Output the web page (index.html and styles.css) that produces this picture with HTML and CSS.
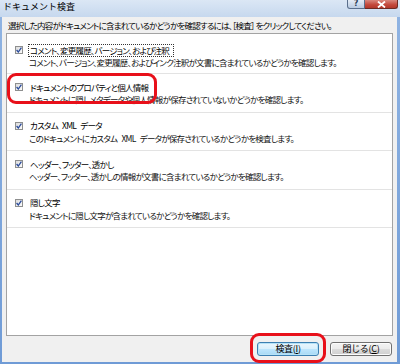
FILE: index.html
```html
<!DOCTYPE html>
<html lang="ja">
<head>
  <meta charset="UTF-8">
  <meta name="viewport" content="width=device-width, initial-scale=1.0">
  <link rel="stylesheet" href="styles.css">
</head>
<body>

<div class="window">
  <div class="titlebar">
    <span class="title">ドキュメント検査</span>
    <div class="caption-btns">
      <span class="cap-help">?</span>
      <span class="cap-close">
        <svg width="9" height="7" viewBox="0 0 9 7"><path d="M1 0.5 L8 6.5 M8 0.5 L1 6.5" stroke="#fff" stroke-width="1.8"/></svg>
      </span>
    </div>
  </div>

  <div class="frame">
    <div class="client">
      <p class="intro">選択した内容がドキュメントに含まれているかどうかを確認するには、［検査］ をクリックしてください。</p>

      <div class="panel">
        <div class="item">
          <div class="item-head">
            <span class="check"><svg width="6" height="6" viewBox="0 0 6 6"><path d="M0.6 3 L2.3 5 L5.4 0.6" fill="none" stroke="#2a4b9b" stroke-width="1.3"/></svg></span>
            <span class="label focus">コメント、変更履歴、バージョン、および注釈</span>
          </div>
          <div class="desc">コメント、バージョン、変更履歴、およびインク注釈が文書に含まれているかどうかを確認します。</div>
        </div>
        <div class="item">
          <div class="item-head">
            <span class="check"><svg width="6" height="6" viewBox="0 0 6 6"><path d="M0.6 3 L2.3 5 L5.4 0.6" fill="none" stroke="#2a4b9b" stroke-width="1.3"/></svg></span>
            <span class="label">ドキュメントのプロパティと個人情報</span>
          </div>
          <div class="desc">ドキュメントに隠しメタデータや個人情報が保存されていないかどうかを確認します。</div>
        </div>
        <div class="item">
          <div class="item-head">
            <span class="check"><svg width="6" height="6" viewBox="0 0 6 6"><path d="M0.6 3 L2.3 5 L5.4 0.6" fill="none" stroke="#2a4b9b" stroke-width="1.3"/></svg></span>
            <span class="label">カスタム XML データ</span>
          </div>
          <div class="desc">このドキュメントにカスタム XML データが保存されているかどうかを検査します。</div>
        </div>
        <div class="item">
          <div class="item-head">
            <span class="check"><svg width="6" height="6" viewBox="0 0 6 6"><path d="M0.6 3 L2.3 5 L5.4 0.6" fill="none" stroke="#2a4b9b" stroke-width="1.3"/></svg></span>
            <span class="label">ヘッダー、フッター、透かし</span>
          </div>
          <div class="desc">ヘッダー、フッター、透かしの情報が文書に含まれているかどうかを確認します。</div>
        </div>
        <div class="item">
          <div class="item-head">
            <span class="check"><svg width="6" height="6" viewBox="0 0 6 6"><path d="M0.6 3 L2.3 5 L5.4 0.6" fill="none" stroke="#2a4b9b" stroke-width="1.3"/></svg></span>
            <span class="label">隠し文字</span>
          </div>
          <div class="desc">ドキュメントに隠し文字が含まれているかどうかを確認します。</div>
        </div>
      </div>

      <div class="actions">
        <button class="btn default">検査(<u>I</u>)</button>
        <button class="btn">閉じる(<u>C</u>)</button>
      </div>
    </div>
  </div>

  <!-- red annotation marks -->
  <div class="mark mark-props"></div>
  <div class="mark mark-inspect"></div>
</div>

</body>
</html>
```

FILE: styles.css
```css
body {
  margin: 0;
  font-family: "Noto Sans CJK JP", sans-serif;
  font-size: 9px;
  color: #000;
}

.window {
  position: relative;
  width: 400px;
  height: 364px;
  display: flex;
  flex-direction: column;
  overflow: hidden;
}

.titlebar {
  height: 17px;
  display: flex;
  align-items: flex-start;
  background: linear-gradient(#dbe7f5, #c6d8ee);
}

.title {
  padding-left: 3px;
  line-height: 13px;
  font-size: 9px;
}

.caption-btns {
  margin-left: auto;
  margin-right: 2px;
  display: flex;
}

.cap-help,
.cap-close {
  height: 9px;
  display: flex;
  align-items: center;
  justify-content: center;
  box-sizing: border-box;
  border: 1px solid #5a6f8c;
  border-top: none;
}

.cap-help {
  width: 18px;
  border-radius: 0 0 0 3px;
  background: linear-gradient(#e4ecf6, #b9cbe2);
  font-family: "DejaVu Sans", sans-serif;
  font-size: 8px;
  font-weight: bold;
  color: #2c3e57;
  line-height: 8px;
}

.cap-close {
  width: 33px;
  border-left: none;
  border-color: #6d2a22;
  border-radius: 0 0 3px 0;
  background: linear-gradient(#d9877d, #c2473a 60%, #b3382c);
}

.frame {
  flex: 1;
  display: flex;
  background: linear-gradient(#8fb3e2, #6f9bd6);
  padding: 0 3px 2px 2px;
}

.client {
  flex: 1;
  display: flex;
  flex-direction: column;
  background: #f0f0f0;
  padding: 0 4px;
}

.intro {
  margin: 0;
  padding-left: 2px;
  height: 16px;
  line-height: 16px;
  font-size: 8.5px;
  font-feature-settings: "palt";
  letter-spacing: -0.8px;
  white-space: nowrap;
}

.panel {
  height: 303px;
  box-sizing: border-box;
  background: #fff;
  border: 1px solid #a3a3a3;
  padding-top: 3px;
}

.item {
  padding: 7px 0 6px 8px;
  border-bottom: 1px solid #e3e3e3;
  font-size: 8.5px;
  font-feature-settings: "palt";
  letter-spacing: -0.75px;
  word-spacing: 3px;
  white-space: nowrap;
}

.item:first-child {
  padding-bottom: 5px;
}

.item + .item {
  padding-bottom: 6.5px;
}

.item-head {
  display: flex;
  align-items: center;
  height: 12px;
}

.check {
  width: 8px;
  height: 8px;
  box-sizing: border-box;
  border: 1px solid #8e8f8f;
  background: linear-gradient(135deg, #dcdcdc, #fbfbfb);
  display: flex;
  align-items: center;
  justify-content: center;
  margin-right: 5px;
}

.label {
  line-height: 11px;
  border: 1px solid transparent;
  padding: 0 1px;
}

.label.focus {
  border: 1px dotted #333;
  padding-right: 4px;
}

.desc {
  height: 12px;
  line-height: 12px;
  padding-left: 14px;
  color: #111;
}

.actions {
  display: flex;
  justify-content: flex-end;
  gap: 11px;
  margin-top: 6px;
  padding-right: 1px;
}

.btn {
  width: 62px;
  height: 14px;
  padding: 0;
  font-family: "Noto Sans CJK JP", sans-serif;
  font-size: 9px;
  line-height: 12px;
  letter-spacing: -0.3px;
  color: #000;
  border: 1px solid #707070;
  border-radius: 3px;
  background: linear-gradient(#f3f3f3 0%, #ebebeb 50%, #dcdcdc 50%, #cfcfcf 100%);
  box-shadow: inset 0 0 0 1px #fcfcfc;
}

.btn.default {
  border-color: #3c7fb1;
  box-shadow: inset 0 0 0 1px #b6e2f7;
  background: linear-gradient(#eaf6fd 0%, #d9f0fc 50%, #bee6fd 50%, #a7d9f5 100%);
}

.btn u {
  text-decoration-thickness: 1px;
}

.mark {
  position: absolute;
  box-sizing: border-box;
  border: 3px solid #e8101a;
  border-radius: 9px;
}

.mark-props {
  left: 7px;
  top: 73px;
  width: 150px;
  height: 31px;
}

.mark-inspect {
  left: 250px;
  top: 333px;
  width: 76px;
  height: 30px;
}
```
